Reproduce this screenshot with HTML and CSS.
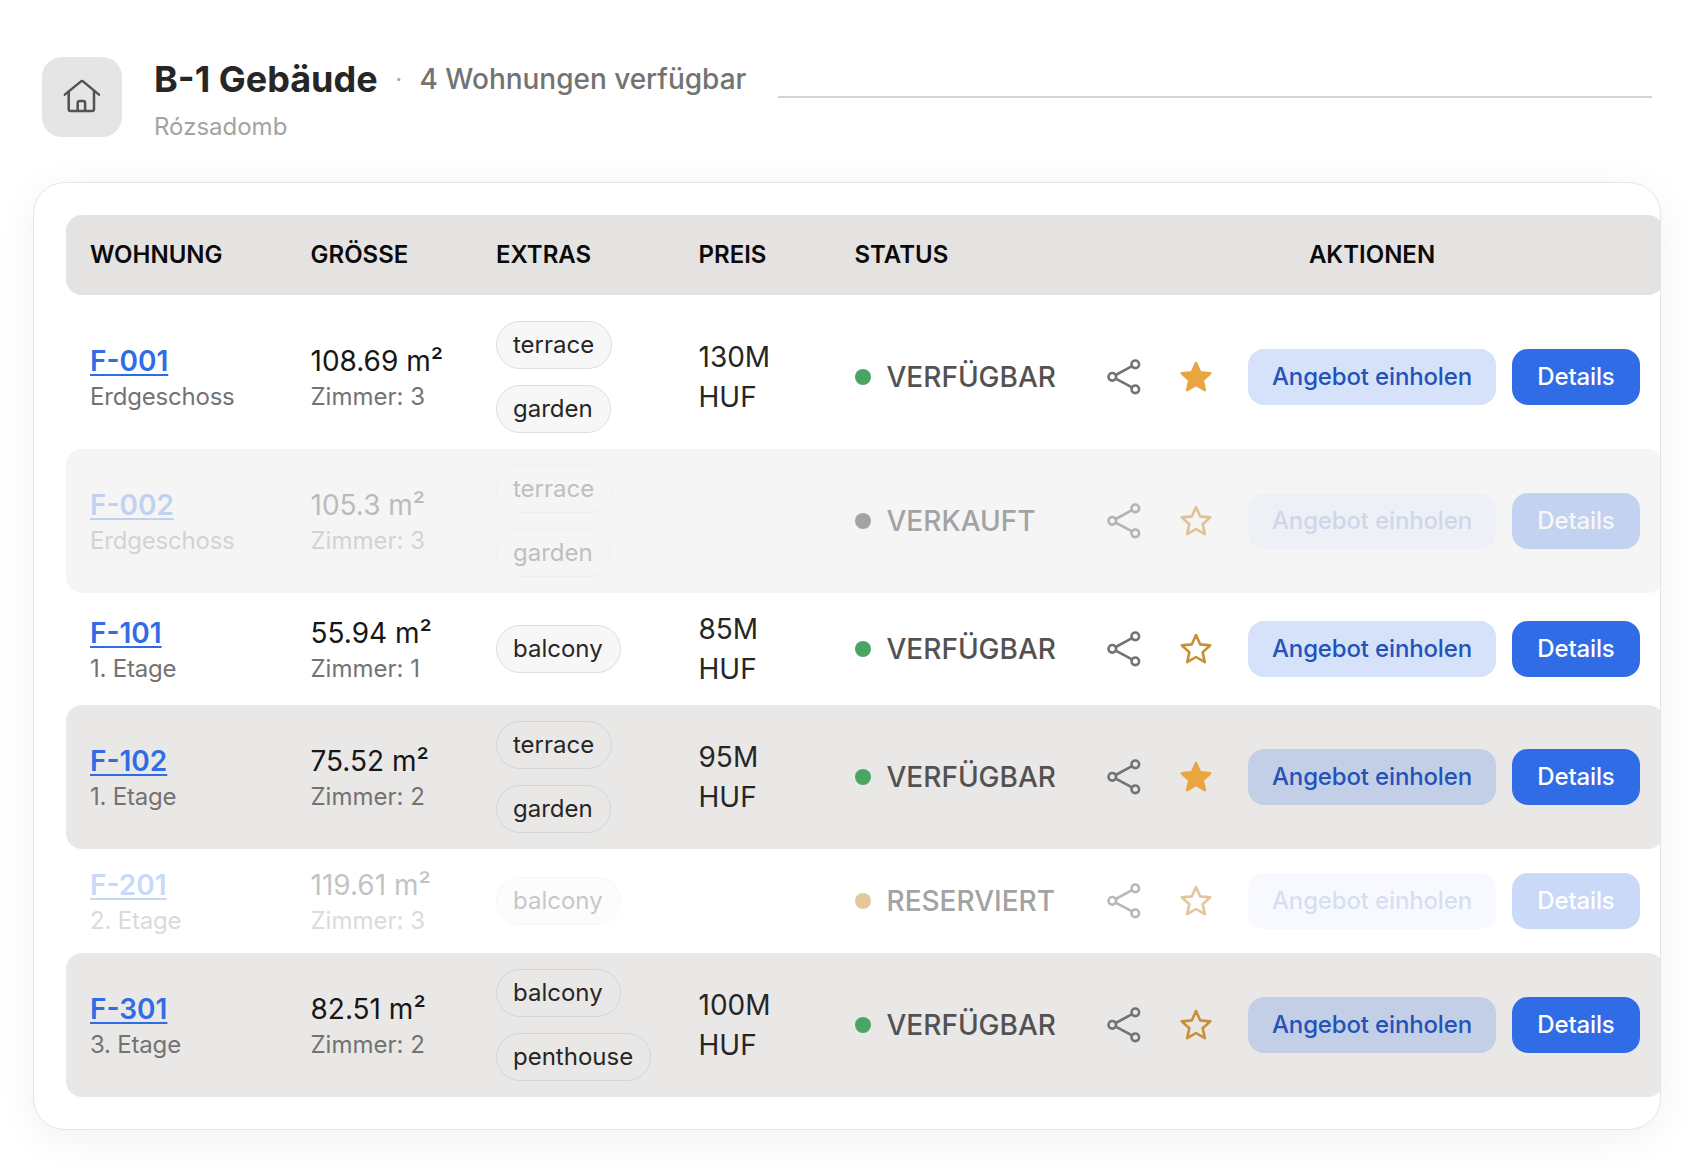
FILE: index.html
```html
<!DOCTYPE html>
<html lang="de">
<head>
<meta charset="utf-8">
<title>B-1 Gebäude</title>
<link rel="stylesheet" href="styles.css">
</head>
<body>
<svg class="defs" width="0" height="0" aria-hidden="true">
  <defs>
    <g id="share"><circle cx="31.3" cy="7.3" r="3.8"/><circle cx="8.3" cy="19.8" r="3.8"/><circle cx="31.3" cy="32.3" r="3.8"/><path d="M11.7 18 28 9.2M11.7 21.7 28 30.4"/></g>
    <path id="star" d="M16 2 20.11 11.34 30.27 12.36 22.66 19.16 24.82 29.14 16 24 7.18 29.14 9.34 19.16 1.73 12.36 11.89 11.34Z"/>
  </defs>
</svg>
<main class="page">
  <header class="head">
    <div class="head-icon">
      <svg width="40" height="40" viewBox="0 0 40 40" fill="none" stroke="#525252" stroke-width="2.5" stroke-linecap="round" stroke-linejoin="round"><path d="M2.8 17.6 18.7 4.6a2 2 0 0 1 2.6 0L37 17.6"/><path d="M6.7 14.5V32a2 2 0 0 0 2 2H30a2 2 0 0 0 2-2V14.5"/><path d="M15.7 34V26a2 2 0 0 1 2-2h3.4a2 2 0 0 1 2 2v8"/></svg>
    </div>
    <div class="head-text">
      <div class="head-line">
        <h1 class="title">B-1 Gebäude</h1>
        <span class="sep">·</span>
        <span class="count">4 Wohnungen verfügbar</span>
      </div>
      <div class="place">Rózsadomb</div>
    </div>
    <div class="rule"></div>
  </header>

  <section class="card">
    <div class="table">
      <div class="row row-head">
        <div class="cell">WOHNUNG</div>
        <div class="cell">GRÖSSE</div>
        <div class="cell">EXTRAS</div>
        <div class="cell">PREIS</div>
        <div class="cell">STATUS</div>
        <div class="cell cell-center">AKTIONEN</div>
      </div>

      <div class="row">
        <div class="cell"><a class="unit" href="#">F-001</a><div class="sub floor">Erdgeschoss</div></div>
        <div class="cell"><div class="size">108.69 m²</div><div class="sub">Zimmer: 3</div></div>
        <div class="cell pills"><span class="pill">terrace</span><span class="pill">garden</span></div>
        <div class="cell price">130M HUF</div>
        <div class="cell status"><i class="dot dot-ok"></i>VERFÜGBAR</div>
        <div class="cell actions">
          <svg class="ic ic-share" viewBox="0 0 40 40"><use href="#share"/></svg>
          <svg class="ic ic-star on" viewBox="-4 -4 40 40"><use href="#star"/></svg>
          <a class="btn btn-soft" href="#">Angebot einholen</a>
          <a class="btn btn-main" href="#">Details</a>
        </div>
      </div>

      <div class="row row-sold faded">
        <div class="cell"><a class="unit" href="#">F-002</a><div class="sub floor">Erdgeschoss</div></div>
        <div class="cell"><div class="size">105.3 m²</div><div class="sub">Zimmer: 3</div></div>
        <div class="cell pills"><span class="pill">terrace</span><span class="pill">garden</span></div>
        <div class="cell price"></div>
        <div class="cell status"><i class="dot dot-sold"></i>VERKAUFT</div>
        <div class="cell actions">
          <svg class="ic ic-share" viewBox="0 0 40 40"><use href="#share"/></svg>
          <svg class="ic ic-star" viewBox="-4 -4 40 40"><use href="#star"/></svg>
          <a class="btn btn-soft" href="#">Angebot einholen</a>
          <a class="btn btn-main" href="#">Details</a>
        </div>
      </div>

      <div class="row">
        <div class="cell"><a class="unit" href="#">F-101</a><div class="sub floor">1. Etage</div></div>
        <div class="cell"><div class="size">55.94 m²</div><div class="sub">Zimmer: 1</div></div>
        <div class="cell pills"><span class="pill">balcony</span></div>
        <div class="cell price">85M HUF</div>
        <div class="cell status"><i class="dot dot-ok"></i>VERFÜGBAR</div>
        <div class="cell actions">
          <svg class="ic ic-share" viewBox="0 0 40 40"><use href="#share"/></svg>
          <svg class="ic ic-star" viewBox="-4 -4 40 40"><use href="#star"/></svg>
          <a class="btn btn-soft" href="#">Angebot einholen</a>
          <a class="btn btn-main" href="#">Details</a>
        </div>
      </div>

      <div class="row row-alt">
        <div class="cell"><a class="unit" href="#">F-102</a><div class="sub floor">1. Etage</div></div>
        <div class="cell"><div class="size">75.52 m²</div><div class="sub">Zimmer: 2</div></div>
        <div class="cell pills"><span class="pill">terrace</span><span class="pill">garden</span></div>
        <div class="cell price">95M HUF</div>
        <div class="cell status"><i class="dot dot-ok"></i>VERFÜGBAR</div>
        <div class="cell actions">
          <svg class="ic ic-share" viewBox="0 0 40 40"><use href="#share"/></svg>
          <svg class="ic ic-star on" viewBox="-4 -4 40 40"><use href="#star"/></svg>
          <a class="btn btn-soft" href="#">Angebot einholen</a>
          <a class="btn btn-main" href="#">Details</a>
        </div>
      </div>

      <div class="row faded">
        <div class="cell"><a class="unit" href="#">F-201</a><div class="sub floor">2. Etage</div></div>
        <div class="cell"><div class="size">119.61 m²</div><div class="sub">Zimmer: 3</div></div>
        <div class="cell pills"><span class="pill">balcony</span></div>
        <div class="cell price"></div>
        <div class="cell status"><i class="dot dot-res"></i>RESERVIERT</div>
        <div class="cell actions">
          <svg class="ic ic-share" viewBox="0 0 40 40"><use href="#share"/></svg>
          <svg class="ic ic-star" viewBox="-4 -4 40 40"><use href="#star"/></svg>
          <a class="btn btn-soft" href="#">Angebot einholen</a>
          <a class="btn btn-main" href="#">Details</a>
        </div>
      </div>

      <div class="row row-alt">
        <div class="cell"><a class="unit" href="#">F-301</a><div class="sub floor">3. Etage</div></div>
        <div class="cell"><div class="size">82.51 m²</div><div class="sub">Zimmer: 2</div></div>
        <div class="cell pills"><span class="pill">balcony</span><span class="pill">penthouse</span></div>
        <div class="cell price">100M HUF</div>
        <div class="cell status"><i class="dot dot-ok"></i>VERFÜGBAR</div>
        <div class="cell actions">
          <svg class="ic ic-share" viewBox="0 0 40 40"><use href="#share"/></svg>
          <svg class="ic ic-star" viewBox="-4 -4 40 40"><use href="#star"/></svg>
          <a class="btn btn-soft" href="#">Angebot einholen</a>
          <a class="btn btn-main" href="#">Details</a>
        </div>
      </div>
    </div>
  </section>
</main>
</body>
</html>
```
FILE: styles.css
```css
* { box-sizing: border-box; }
html, body { margin: 0; height: 100%; }
body {
  background: #fff;
  color: #171717;
  font-family: Inter, "Liberation Sans", sans-serif;
  overflow: hidden;
}
.defs { position: absolute; }
.page { padding: 57px 41px 0 33px; }

.head { display: flex; align-items: flex-start; gap: 32px; margin: 0 9px 45px; height: 80px; }
.head-icon {
  width: 80px; height: 80px; border-radius: 20px; background: #e5e5e5;
  display: flex; align-items: center; justify-content: center; flex: none;
}
.head-line { display: flex; align-items: center; gap: 17.5px; height: 44px; white-space: nowrap; }
.title { margin: 0; font-size: 36px; font-weight: 700; letter-spacing: 0; color: #262626; line-height: 44px; }
.sep { font-size: 24px; color: #a3a3a3; }
.count { font-size: 28px; font-weight: 500; letter-spacing: -0.03px; color: #737373; line-height: 40px; }
.place { margin-top: 10px; font-size: 24px; line-height: 32px; color: #a3a3a3; }
.rule { flex: 1; height: 2px; margin-top: 39px; background: #d4d4d4; }

.card {
  width: 1628px; height: 948px;
  background: #fff;
  border: 1px solid #e5e5e5;
  border-radius: 32px;
  padding: 32px;
  overflow: hidden;
  box-shadow: 0 8px 40px rgba(0, 0, 0, .06);
}
.table { width: 1598px; }
.row {
  display: grid;
  grid-template-columns: 220.5px 185.5px 202.5px 156px 249.5px 1fr;
  align-items: center;
  border-radius: 16px;
}
.cell { padding: 16px 24px; }
.row-head {
  background: #e5e3e2; height: 80px; margin-bottom: 10px;
  font-size: 24px; font-weight: 600; color: #0a0a0a;
}
.row-head .cell { padding-top: 15px; padding-bottom: 17px; }
.cell-center { text-align: center; }
.row-alt { background: #e9e8e7; }
.row-sold { background: #f5f5f5; }

.unit { font-size: 28px; line-height: 40px; font-weight: 600; color: #2f6ce5; display: block; width: fit-content; text-underline-offset: 3px; }
.size { font-size: 28px; line-height: 40px; color: #171717; }
.sub { font-size: 24px; line-height: 32px; color: #737373; }
.floor { letter-spacing: -0.2px; }
.price { font-size: 28px; line-height: 40px; color: #262626; }

.pills { display: flex; flex-direction: column; align-items: flex-start; gap: 16px; }
.pill {
  height: 48px; padding: 0 17px 0 16px; border-radius: 24px;
  border: 1px solid #dedede;
  background: #f7f7f7;
  font-size: 24px; line-height: 45px; color: #262626;
}
.row-alt .pill { background: transparent; border-color: #d6d6d6; }

.status { display: flex; align-items: center; gap: 16px; font-size: 28px; font-weight: 500; color: #525252; white-space: nowrap; }
.dot { width: 16px; height: 16px; border-radius: 50%; flex: none; }
.dot-ok { background: #4aa564; }
.dot-sold { background: #a3a3a3; }
.dot-res { background: #e5c79c; }

.actions { display: flex; align-items: center; justify-content: flex-end; gap: 16px; }
.ic { width: 40px; height: 40px; flex: none; }
.ic-share { fill: none; stroke: #737373; stroke-width: 2.6; margin-right: 16px; stroke-linecap: round; }
.ic-star { fill: none; stroke: #c98f35; stroke-width: 2.6; stroke-linejoin: round; margin-right: 16px; }
.ic-star.on { fill: #e9a53f; stroke: #e9a53f; }

.btn {
  height: 56px; padding-bottom: 2px; border-radius: 16px;
  display: flex; align-items: center; justify-content: center;
  font-size: 24px; letter-spacing: -0.15px; font-weight: 500; text-decoration: none; white-space: nowrap;
}
.btn-soft { width: 248px; background: rgba(47, 108, 229, .2); color: #2452b8; }
.btn-main { width: 128px; background: #2f6ce5; color: #fff; }

.faded .unit, .faded .sub, .faded .size, .faded .pill { opacity: .26; }
.faded .status { color: #a3a3a3; }
.faded .ic { opacity: .5; }
.faded .btn-soft { opacity: .18; }
.faded .btn-main { opacity: .25; }
```
